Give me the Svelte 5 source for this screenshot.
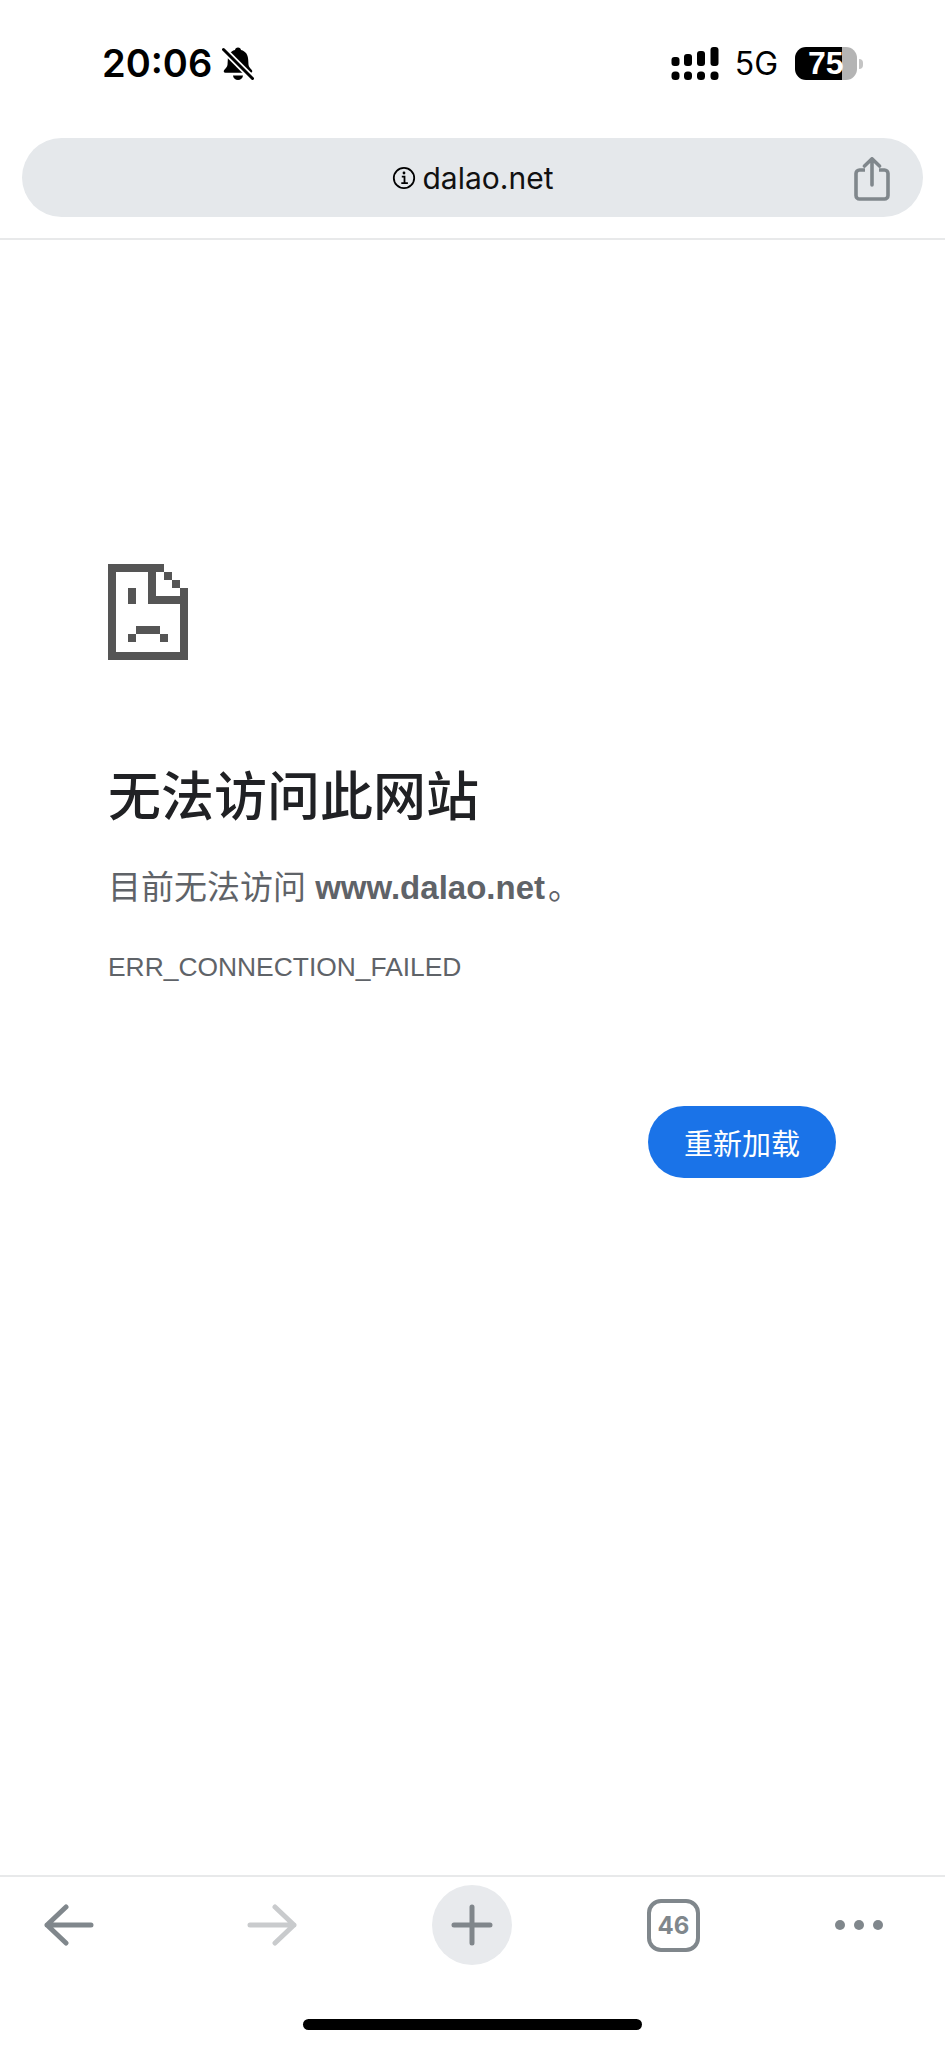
<script>
  const tabCount = 46;
  const host = 'dalao.net';

  // sad document, drawn on an 8px pixel grid
  const docPixels = [
    [0, 0, 7, 1], [0, 1, 1, 11], [1, 11, 9, 1], [9, 3, 1, 8],
    [7, 1, 1, 1], [8, 2, 1, 1], [5, 1, 1, 4], [6, 4, 3, 1],
    [2.5, 3, 1, 2], [3.5, 7.75, 3, 1], [2.5, 8.75, 1, 1], [6.5, 8.75, 1, 1]
  ];
</script>

<div class="page">
  <header class="status">
    <div class="status-left">
      <span class="time">20:06</span>
      <svg class="bell" viewBox="0 0 32 34" width="32" height="34">
        <path d="M16 0.500c1.800 0 2.800 1 3 2.600 5 1.300 7 5 7.200 9.700l.3 5c.2 2 1.800 3.700 3.300 5.200 1 1.100.4 2.800-1.100 2.800H3.300c-1.500 0-2.100-1.700-1.100-2.800 1.500-1.500 3.100-3.200 3.300-5.200l.3-5c.2-4.700 2.200-8.400 7.200-9.700C13.200 1.500 14.200.5 16 .5z" fill="#000" />
        <path d="M11 28.500h10c-.3 2.800-2.400 4.500-5 4.500s-4.700-1.700-5-4.500z" fill="#000" />
        <path d="M1.500 2.500l29 29" stroke="#fff" stroke-width="6.500" />
        <path d="M1.500 2.500l29 29" stroke="#000" stroke-width="3" stroke-linecap="round" />
      </svg>
    </div>
    <div class="status-right">
      <svg class="signal" viewBox="0 0 49 33" width="49" height="33" fill="#000">
        <rect x="0.500" y="10" width="8" height="9" rx="3" />
        <rect x="13" y="7" width="8" height="12" rx="3" />
        <rect x="26" y="4" width="8" height="15" rx="3" />
        <rect x="39.500" y="0" width="8" height="19" rx="3" />
        <rect x="0.500" y="24.500" width="8" height="8.500" rx="3.500" />
        <rect x="13" y="24.500" width="8" height="8.500" rx="3.500" />
        <rect x="26" y="24.500" width="8" height="8.500" rx="3.500" />
        <rect x="39.500" y="24.500" width="8" height="8.500" rx="3.500" />
      </svg>
      <span class="net">5G</span>
      <div class="battery"><span>75</span></div>
      <div class="battery-cap"></div>
    </div>
  </header>

  <div class="toolbar">
    <div class="urlbar">
      <div class="url">
        <svg viewBox="0 0 24 24" width="24" height="24" fill="none" stroke="#000">
          <circle cx="12" cy="12" r="10.200" stroke-width="1.800" />
          <path d="M9.800 10.700H12.500V17M9.300 17.200h6.600" stroke-width="1.800" />
          <circle cx="12" cy="7" r="1.400" fill="#000" stroke="none" />
        </svg>
        <span>{host}</span>
      </div>
      <svg class="share" viewBox="0 0 36 44" width="36" height="44" fill="none" stroke="#80878c" stroke-width="3.600">
        <path d="M11 13H5.500A3.500 3.500 0 0 0 2 16.500V38.500A3.500 3.500 0 0 0 5.500 42H30.500A3.500 3.500 0 0 0 34 38.500V16.500A3.500 3.500 0 0 0 30.500 13H25" />
        <path d="M18 28V2M10.500 9L18 1.800L25.500 9" stroke-linecap="round" stroke-linejoin="round" />
      </svg>
    </div>
  </div>

  <main class="content">
    <svg class="doc" viewBox="0 0 80 96" width="80" height="96" fill="#555">
      {#each docPixels as [x, y, w, h]}
        <rect x={x * 8} y={y * 8} width={w * 8} height={h * 8} />
      {/each}
    </svg>
    <h1>无法访问此网站</h1>
    <p class="desc">目前无法访问 <strong>www.dalao.net</strong>。</p>
    <p class="code">ERR_CONNECTION_FAILED</p>
    <div class="actions">
      <button>重新加载</button>
    </div>
  </main>

  <footer class="bottom">
    <nav class="tabs">
      <svg viewBox="0 0 50 42" width="50" height="42" fill="none" stroke="#80878c" stroke-width="5" stroke-linecap="round" stroke-linejoin="round">
        <path d="M47 21H3M22 3L3 21L22 39" />
      </svg>
      <svg class="forward" viewBox="0 0 50 42" width="50" height="42" fill="none" stroke="#c9cbcd" stroke-width="5" stroke-linecap="round" stroke-linejoin="round">
        <path d="M3 21H47M28 3L47 21L28 39" />
      </svg>
      <div class="new-tab">
        <svg viewBox="0 0 42 42" width="42" height="42" fill="none" stroke="#80868b" stroke-width="5" stroke-linecap="round">
          <path d="M3 21H39M21 3V39" />
        </svg>
      </div>
      <div class="tab-count">{tabCount}</div>
      <div class="more"><i></i><i></i><i></i></div>
    </nav>
    <div class="home"></div>
  </footer>
</div>

<style>
  :global(body) {
    margin: 0;
    background: #fff;
  }

  .page {
    display: flex;
    flex-direction: column;
    height: 2048px;
    font-family: "Liberation Sans", "Noto Sans CJK SC", sans-serif;
  }

  .status {
    display: flex;
    justify-content: space-between;
    align-items: center;
    height: 33px;
    padding: 47px 82px 0 102px;
  }

  .status-left {
    display: flex;
    align-items: center;
    gap: 10px;
  }

  .time {
    font-family: Inter, sans-serif;
    font-size: 38px;
    font-weight: 600;
    line-height: 33px;
    color: #000;
  }

  .status-right {
    display: flex;
    align-items: center;
  }

  .net {
    margin-left: 15px;
    margin-right: 17px;
    font-family: Inter, sans-serif;
    font-size: 32px;
    line-height: 33px;
    color: #000;
  }

  .battery {
    display: flex;
    align-items: center;
    box-sizing: border-box;
    width: 62px;
    height: 33px;
    padding-left: 13px;
    border-radius: 11px;
    background: linear-gradient(90deg, #000 47px, #b4b4b4 47px);
  }

  .battery span {
    font-size: 32px;
    font-weight: 700;
    color: #fff;
  }

  .battery-cap {
    width: 4px;
    height: 10px;
    margin-left: 2px;
    border-radius: 0 4px 4px 0;
    background: #c4c4c4;
  }

  .toolbar {
    box-sizing: border-box;
    height: 160px;
    padding: 58px 22px 0;
    border-bottom: 2px solid #e8e9ea;
  }

  .urlbar {
    position: relative;
    display: flex;
    justify-content: center;
    align-items: center;
    height: 79px;
    border-radius: 40px;
    background: #e5e8eb;
  }

  .url {
    display: flex;
    align-items: center;
    gap: 7px;
    font-family: Inter, sans-serif;
    font-size: 30px;
    color: #111;
  }

  .share {
    position: absolute;
    right: 33px;
    top: 19px;
  }

  .content {
    flex: 1;
    padding: 324px 108px 0;
  }

  .doc {
    display: block;
  }

  h1 {
    margin: 98px 0 0;
    font-family: "Noto Sans CJK SC", sans-serif;
    font-size: 53px;
    font-weight: 500;
    line-height: 70px;
    color: #202124;
  }

  .desc {
    margin: 38px 0 0;
    font-size: 33px;
    line-height: 44px;
    color: #5f6368;
  }

  .desc strong {
    margin-right: 3px;
  }

  .code {
    margin: 39px 0 0;
    font-size: 26.400px;
    line-height: 36px;
    color: #5f6368;
  }

  .actions {
    display: flex;
    justify-content: flex-end;
    margin: 121px 1px 0 0;
  }

  button {
    width: 188px;
    height: 72px;
    padding: 0;
    border: none;
    border-radius: 36px;
    background: #1a73e8;
    color: #fff;
    font-family: "Noto Sans CJK SC", sans-serif;
    font-size: 29px;
  }

  .bottom {
    padding-bottom: 18px;
    border-top: 2px solid #e8e9ea;
  }

  .tabs {
    display: flex;
    align-items: center;
    gap: 135px;
    height: 96px;
    padding-left: 44px;
  }

  .forward {
    margin-left: 18px;
  }

  .new-tab {
    display: flex;
    justify-content: center;
    align-items: center;
    width: 80px;
    height: 80px;
    border-radius: 50%;
    background: #e8eaed;
  }

  .tab-count {
    display: flex;
    justify-content: center;
    align-items: center;
    box-sizing: border-box;
    width: 53px;
    height: 53px;
    border: 4px solid #80878c;
    border-radius: 14px;
    color: #80878c;
    font-family: Inter, sans-serif;
    font-size: 24px;
    font-weight: 700;
  }

  .more {
    display: flex;
    gap: 9px;
  }

  .more i {
    width: 10px;
    height: 10px;
    border-radius: 50%;
    background: #80878c;
  }

  .home {
    width: 339px;
    height: 11px;
    margin: 46px auto 0;
    border-radius: 6px;
    background: #000;
  }
</style>
